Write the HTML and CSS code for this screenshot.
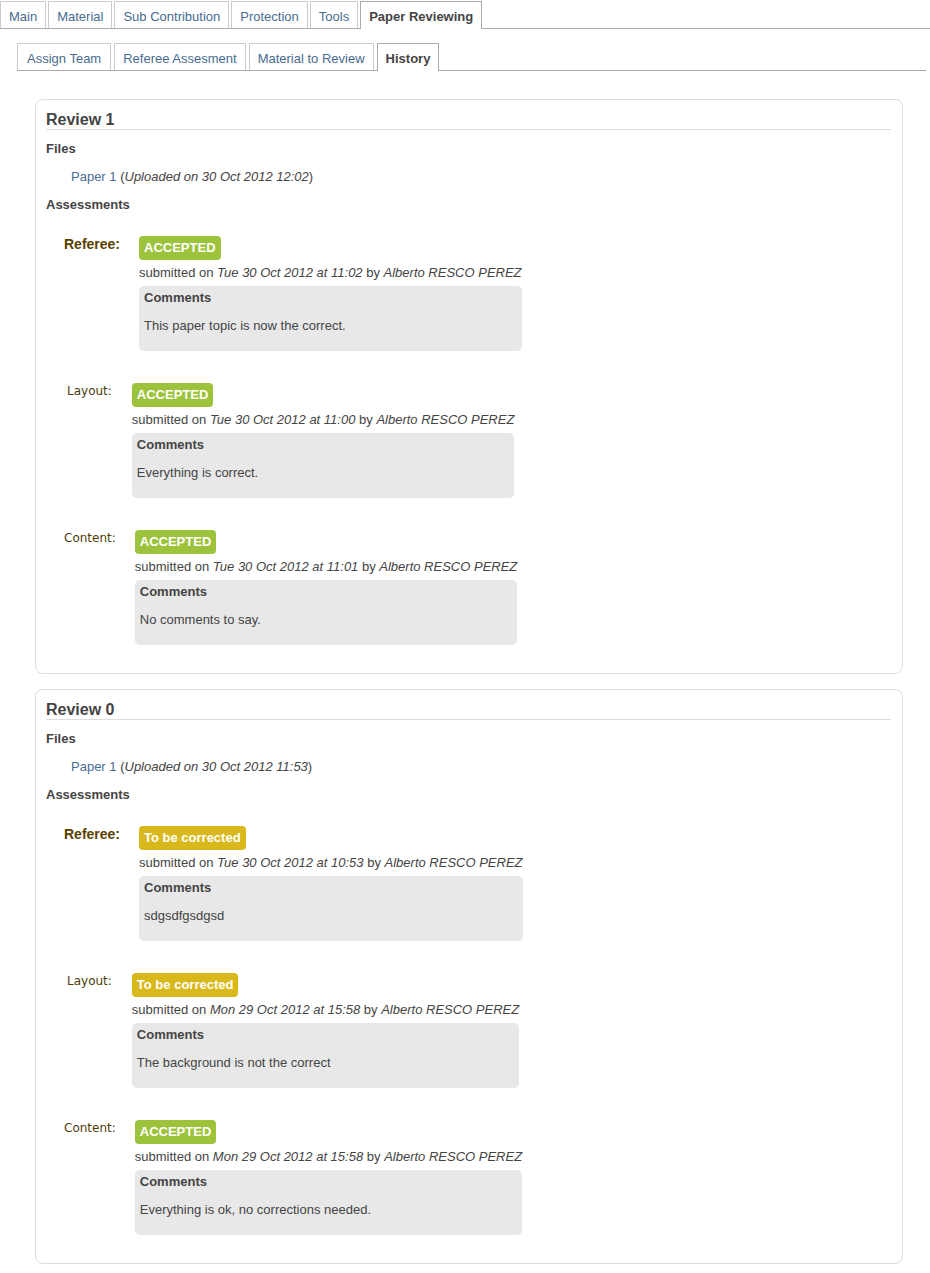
FILE: index.html
```html
<!DOCTYPE html>
<html>
<head>
<meta charset="utf-8">
<title>Paper Reviewing - History</title>
<link rel="stylesheet" href="styles.css">
</head>
<body>
<ul class="tabs main-tabs">
  <li class="tab">Main</li>
  <li class="tab">Material</li>
  <li class="tab">Sub Contribution</li>
  <li class="tab">Protection</li>
  <li class="tab">Tools</li>
  <li class="tab active">Paper Reviewing</li>
</ul>
<ul class="tabs sub-tabs">
  <li class="tab">Assign Team</li>
  <li class="tab">Referee Assesment</li>
  <li class="tab">Material to Review</li>
  <li class="tab active">History</li>
</ul>

<div class="reviews">
  <section class="card">
    <h2 class="card-title">Review 1</h2>
    <h3 class="sub-title">Files</h3>
    <div class="file"><a class="link">Paper 1</a> (<em>Uploaded on 30 Oct 2012 12:02</em>)</div>
    <h3 class="sub-title">Assessments</h3>

    <div class="assess">
      <div class="label label-referee">Referee:</div>
      <div class="detail">
        <span class="badge badge-ok">ACCEPTED</span>
        <div class="submitted">submitted on <em>Tue 30 Oct 2012 at 11:02</em> by <em>Alberto RESCO PEREZ</em></div>
        <div class="comments">
          <div class="comments-title">Comments</div>
          <div class="comments-text">This paper topic is now the correct.</div>
        </div>
      </div>
    </div>

    <div class="assess">
      <div class="label label-layout">Layout:</div>
      <div class="detail">
        <span class="badge badge-ok">ACCEPTED</span>
        <div class="submitted">submitted on <em>Tue 30 Oct 2012 at 11:00</em> by <em>Alberto RESCO PEREZ</em></div>
        <div class="comments">
          <div class="comments-title">Comments</div>
          <div class="comments-text">Everything is correct.</div>
        </div>
      </div>
    </div>

    <div class="assess">
      <div class="label">Content:</div>
      <div class="detail">
        <span class="badge badge-ok">ACCEPTED</span>
        <div class="submitted">submitted on <em>Tue 30 Oct 2012 at 11:01</em> by <em>Alberto RESCO PEREZ</em></div>
        <div class="comments">
          <div class="comments-title">Comments</div>
          <div class="comments-text">No comments to say.</div>
        </div>
      </div>
    </div>
  </section>

  <section class="card">
    <h2 class="card-title">Review 0</h2>
    <h3 class="sub-title">Files</h3>
    <div class="file"><a class="link">Paper 1</a> (<em>Uploaded on 30 Oct 2012 11:53</em>)</div>
    <h3 class="sub-title">Assessments</h3>

    <div class="assess">
      <div class="label label-referee">Referee:</div>
      <div class="detail">
        <span class="badge badge-fix">To be corrected</span>
        <div class="submitted">submitted on <em>Tue 30 Oct 2012 at 10:53</em> by <em>Alberto RESCO PEREZ</em></div>
        <div class="comments">
          <div class="comments-title">Comments</div>
          <div class="comments-text">sdgsdfgsdgsd</div>
        </div>
      </div>
    </div>

    <div class="assess">
      <div class="label label-layout">Layout:</div>
      <div class="detail">
        <span class="badge badge-fix">To be corrected</span>
        <div class="submitted">submitted on <em>Mon 29 Oct 2012 at 15:58</em> by <em>Alberto RESCO PEREZ</em></div>
        <div class="comments">
          <div class="comments-title">Comments</div>
          <div class="comments-text">The background is not the correct</div>
        </div>
      </div>
    </div>

    <div class="assess">
      <div class="label">Content:</div>
      <div class="detail">
        <span class="badge badge-ok">ACCEPTED</span>
        <div class="submitted">submitted on <em>Mon 29 Oct 2012 at 15:58</em> by <em>Alberto RESCO PEREZ</em></div>
        <div class="comments">
          <div class="comments-title">Comments</div>
          <div class="comments-text">Everything is ok, no corrections needed.</div>
        </div>
      </div>
    </div>
  </section>
</div>
</body>
</html>
```
FILE: styles.css
```css
html, body {
  margin: 0;
  padding: 0;
  background: #fff;
}
body {
  font-family: "Liberation Sans", Arial, sans-serif;
  font-size: 13px;
  line-height: 16px;
  color: #444;
}
.tabs {
  list-style: none;
  margin: 0;
  padding: 0;
  display: flex;
  gap: 2px;
  border-bottom: 1px solid #aaa;
}
.main-tabs {
  padding-top: 1px;
}
.sub-tabs {
  margin: 14px 4px 0 17px;
  gap: 3px;
}
.tab {
  border: 1px solid #ccc;
  border-bottom: 0;
  padding: 7px 8px 3px;
  color: #476b8f;
  background: #fff;
}
.sub-tabs .tab:first-child {
  padding-left: 9px;
  padding-right: 9px;
}
.tab.active {
  border-color: #aaa;
  color: #444;
  font-weight: bold;
  margin-bottom: -1px;
  padding-bottom: 4px;
}
.reviews {
  margin: 28px 27px 0 35px;
  display: flex;
  flex-direction: column;
  gap: 15px;
}
.card {
  border: 1px solid #ddd;
  border-radius: 8px;
  padding: 10px 11px 28px 10px;
}
.card-title {
  margin: 0;
  font-size: 16px;
  line-height: 19px;
  font-weight: bold;
  color: #444;
  border-bottom: 1px solid #ddd;
}
.sub-title {
  margin: 12px 0 0;
  font-size: 13px;
  line-height: 16px;
  font-weight: bold;
  color: #444;
}
.card-title + .sub-title {
  margin-top: 11px;
}
.file {
  margin: 12px 0 0 25px;
}
.link {
  color: #4a6d94;
  text-decoration: none;
}
em {
  font-style: italic;
}
.assess {
  display: flex;
  align-items: flex-start;
  margin: 23px 0 0 18px;
}
.assess + .assess {
  margin-top: 32px;
}
.label {
  font-family: "DejaVu Sans", Verdana, sans-serif;
  font-size: 12px;
  line-height: 16px;
  color: #4f3c0c;
  margin-right: 19px;
}
.label-layout {
  padding: 0 1px 0 3px;
}
.label-referee {
  font-family: "Liberation Sans", Arial, sans-serif;
  font-size: 14px;
  font-weight: bold;
  color: #5a4000;
}
.detail {
  display: block;
}
.badge {
  display: inline-block;
  padding: 4px 5px;
  border-radius: 4px;
  color: #fff;
  font-weight: bold;
  font-size: 13px;
  line-height: 16px;
}
.badge-ok {
  background: #9cc33b;
}
.badge-fix {
  background: #d9b81b;
}
.submitted {
  margin-top: 5px;
  white-space: nowrap;
}
.comments {
  margin-top: 5px;
  background: #e8e8e8;
  border-radius: 5px;
  padding: 4px 5px 17px;
}
.comments-title {
  font-weight: bold;
}
.comments-text {
  margin-top: 12px;
}
```
